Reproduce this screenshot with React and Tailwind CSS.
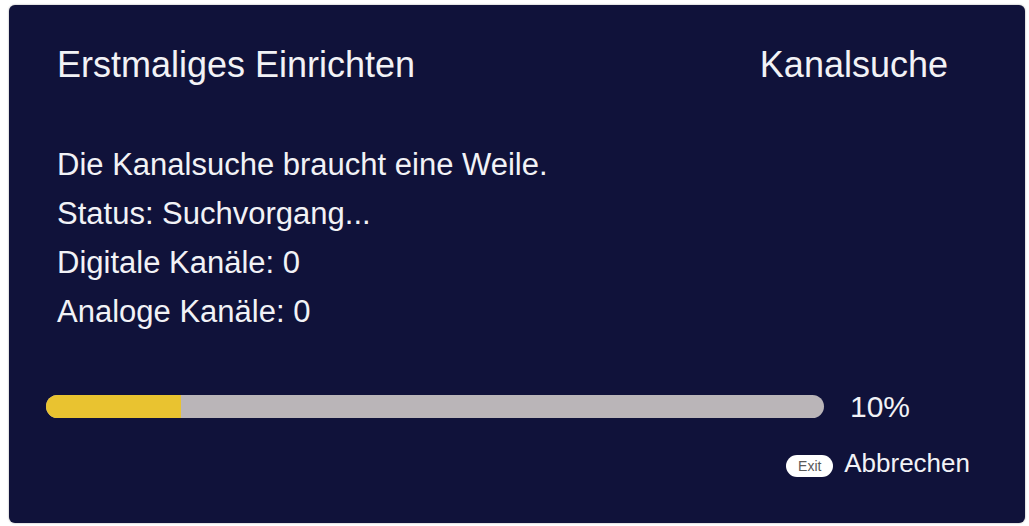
const lines = [
  "Die Kanalsuche braucht eine Weile.",
  "Status: Suchvorgang...",
  "Digitale Kanäle: 0",
  "Analoge Kanäle: 0",
];

const progress = 17.4;

export default function App() {
  return (
    <div
      className="w-[1029px] h-[526px] bg-white pl-[9px] pt-[5px] overflow-hidden"
      style={{ fontFamily: '"Liberation Sans", Arial, sans-serif' }}
    >
      <div className="w-[1016px] h-[518px] rounded-[6px] bg-[#10123a] text-[#f2f2f6] pt-[40px] shadow-[0_0_2px_rgba(0,0,0,0.4)]">
        {/* HEADER */}
        <div className="flex justify-between pl-[48px] pr-[77px] text-[36px] leading-[40px]">
          <span>Erstmaliges Einrichten</span>
          <span>Kanalsuche</span>
        </div>

        {/* INFO */}
        <div className="mt-[55px] pl-[48px] text-[31px] leading-[49px]">
          {lines.map((l) => (
            <div key={l}>{l}</div>
          ))}
        </div>

        {/* PROGRESS */}
        <div className="mt-[59px] pl-[37px] h-[23px] flex items-center">
          <div className="w-[778px] h-[23px] rounded-full bg-[#bab5b8] overflow-hidden">
            <div className="h-full bg-[#e9c330]" style={{ width: `${progress}%` }} />
          </div>
          <span className="ml-[26px] text-[30px] leading-[23px]">10%</span>
        </div>

        {/* FOOTER */}
        <div className="mt-[30px] flex justify-end items-start pr-[55px]">
          <span className="mt-[7px] w-[47px] h-[22px] rounded-full bg-white text-[#5a5a5a] text-[14px] leading-[22px] text-center">
            Exit
          </span>
          <span className="ml-[11px] text-[26px] leading-[30px]">Abbrechen</span>
        </div>
      </div>
    </div>
  );
}
